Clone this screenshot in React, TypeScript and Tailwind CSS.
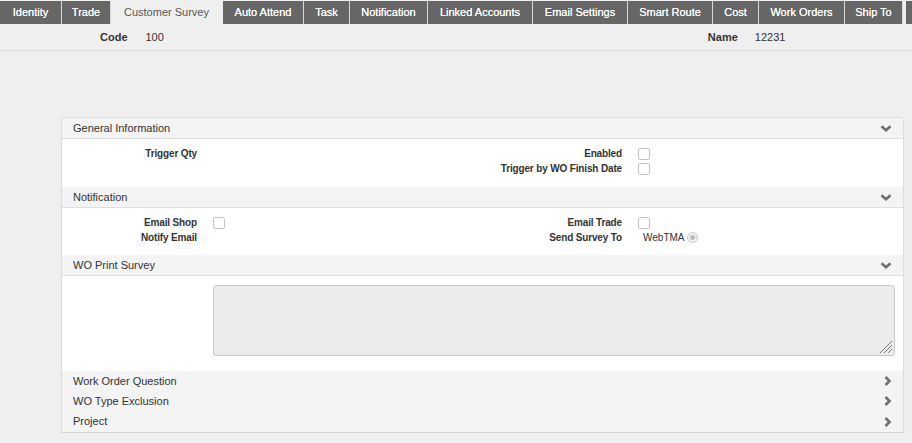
import React from "react";

const tabs: { label: string; w: string; active?: boolean }[] = [
  { label: "Identity", w: "w-[62px]" },
  { label: "Trade", w: "w-[49px]" },
  { label: "Customer Survey", w: "w-[112px]", active: true },
  { label: "Auto Attend", w: "w-[81px]" },
  { label: "Task", w: "w-[46px]" },
  { label: "Notification", w: "w-[78px]" },
  { label: "Linked Accounts", w: "w-[105px]" },
  { label: "Email Settings", w: "w-[95px]" },
  { label: "Smart Route", w: "w-[85px]" },
  { label: "Cost", w: "w-[46px]" },
  { label: "Work Orders", w: "w-[86px]" },
  { label: "Ship To", w: "w-[58px]" },
];

function ChevronDown() {
  return (
    <svg width="12" height="7" viewBox="0 0 12 7" className="block">
      <polyline points="1.5,1.2 6,5.2 10.5,1.2" fill="none" stroke="#6f6f6f" strokeWidth="2.6" />
    </svg>
  );
}

function ChevronRight() {
  return (
    <svg width="8" height="10" viewBox="0 0 8 10" className="block">
      <polyline points="1.5,1 5.5,5 1.5,9" fill="none" stroke="#6f6f6f" strokeWidth="2.6" />
    </svg>
  );
}

function Checkbox() {
  return <div className="w-[12px] h-[12px] rounded-[2px] border border-[#c4c4c4] bg-white" />;
}

function SectionHeader({ title, open = true }: { title: string; open?: boolean }) {
  return (
    <div
      className={`flex items-center justify-between pl-[11px] pr-[11px] bg-[#f4f4f4] ${
        open ? "border-b border-[#dedede] h-[21px]" : "h-[20px]"
      }`}
    >
      <span className="text-[11px] text-[#333]">{title}</span>
      {open ? <ChevronDown /> : <ChevronRight />}
    </div>
  );
}

function Row({
  label,
  labelW,
  children,
}: {
  label: string;
  labelW: string;
  children?: React.ReactNode;
}) {
  return (
    <div className="h-[15px] flex items-center">
      <div className={`${labelW} text-right font-bold text-[10px] tracking-[-0.15px] text-[#333] shrink-0`}>
        {label}
      </div>
      <div className="ml-[16px] flex items-center">{children}</div>
    </div>
  );
}

export default function App() {
  return (
    <div
      className="w-[912px] h-[443px] bg-[#efefef] overflow-hidden text-[#333]"
      style={{ fontFamily: '"Liberation Sans", Arial, sans-serif' }}
    >
      {/* Tab bar */}
      <div className="pt-[1px] flex h-[24px]">
        {tabs.map((t) => (
          <div
            key={t.label}
            className={`${t.w} h-[23px] flex items-center justify-center text-[11px] shrink-0 ${
              t.active
                ? "bg-[#efefef] text-[#555] border-r border-[#efefef]"
                : "bg-[#666666] text-white border-r border-[#d9d9d9] [text-shadow:0_0_0.5px_#fff]"
            }`}
          >
            {t.label}
          </div>
        ))}
        <div className="w-[3px] shrink-0" />
        <div className="flex-1 h-[23px] bg-[#666666]" />
      </div>

      {/* Header row */}
      <div className="h-[27px] border-b border-[#dcdcdc] flex items-center text-[11px]">
        <span className="ml-[100px] font-bold">Code</span>
        <span className="ml-[18px]">100</span>
        <span className="ml-[544px] font-bold">Name</span>
        <span className="ml-[17px]">12231</span>
      </div>

      {/* Panel */}
      <div className="mt-[66px] ml-[61px] w-[843px] border border-[#dddddd] border-b-0 rounded-tr-[4px] bg-white shadow-[0_1px_1px_rgba(0,0,0,0.12)] overflow-hidden">
        <SectionHeader title="General Information" />
        <div className="h-[48px] pt-[7px] flex">
          <div className="w-[420px]">
            <Row label="Trigger Qty" labelW="w-[135px]" />
          </div>
          <div>
            <Row label="Enabled" labelW="w-[140px]">
              <Checkbox />
            </Row>
            <Row label="Trigger by WO Finish Date" labelW="w-[140px]">
              <Checkbox />
            </Row>
          </div>
        </div>

        <SectionHeader title="Notification" />
        <div className="h-[47px] pt-[7px] flex">
          <div className="w-[420px]">
            <Row label="Email Shop" labelW="w-[135px]">
              <Checkbox />
            </Row>
            <Row label="Notify Email" labelW="w-[135px]" />
          </div>
          <div>
            <Row label="Email Trade" labelW="w-[140px]">
              <Checkbox />
            </Row>
            <Row label="Send Survey To" labelW="w-[140px]">
              <span className="ml-[5px] text-[10px] text-[#333]">WebTMA</span>
              <span className="ml-[2px] w-[11px] h-[11px] rounded-full border border-[#c8c8c8] bg-[#f0f0f0] flex items-center justify-center">
                <span className="w-[5px] h-[5px] rounded-full bg-[#bdbdbd]" />
              </span>
            </Row>
          </div>
        </div>

        <SectionHeader title="WO Print Survey" />
        <div className="h-[95px] pt-[9px] pl-[151px] pr-[8px]">
          <div className="relative h-[71px] rounded-[3px] border border-[#c9c9c9] bg-[#ececec]">
            <svg width="14" height="14" viewBox="0 0 14 14" className="absolute right-[1px] bottom-[1px]">
              <line x1="13" y1="1" x2="1" y2="13" stroke="#777" strokeWidth="1" />
              <line x1="13" y1="5" x2="5" y2="13" stroke="#777" strokeWidth="1" />
              <line x1="13" y1="9" x2="9" y2="13" stroke="#777" strokeWidth="1" />
            </svg>
          </div>
        </div>

        <SectionHeader title="Work Order Question" open={false} />
        <SectionHeader title="WO Type Exclusion" open={false} />
        <div className="h-[21px] flex items-center justify-between pl-[11px] pr-[11px] bg-[#f4f4f4]">
          <span className="text-[11px] text-[#333]">Project</span>
          <ChevronRight />
        </div>
      </div>
    </div>
  );
}
